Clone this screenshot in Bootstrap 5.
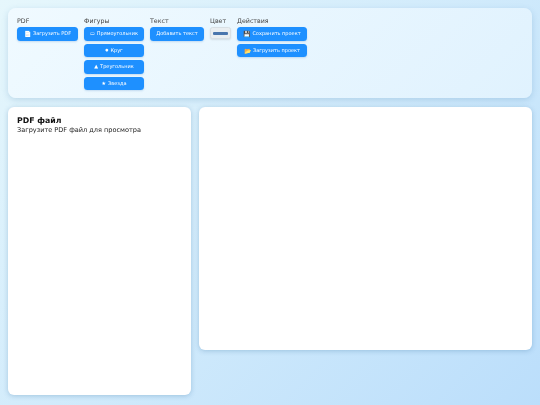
<!DOCTYPE html>
<html lang="ru"><head><meta charset="utf-8"><title>PDF</title>
<link href="https://cdn.jsdelivr.net/npm/bootstrap@5.3.0/dist/css/bootstrap.min.css" rel="stylesheet">
<style>
html,body{height:405px;overflow:hidden}
body{background:linear-gradient(135deg,#e6f7fc 0%,#bbdefb 100%);font-family:"DejaVu Sans",sans-serif;color:#212529;padding:8px}
.tool-panel{height:90px;background:linear-gradient(135deg,#f0faff,#e0f2fe);border-radius:8px;padding:9.4px 9px;box-shadow:0 2px 6px rgba(60,120,170,.22);gap:6px}
.tool-group{display:flex;flex-direction:column}
.tool-label{font-size:6.3px;line-height:8px;margin-bottom:2px;color:#444;height:8px;filter:blur(.2px)}
.tool-stack{display:flex;flex-direction:column;gap:3px}
.tool-btn{background:#1e90ff;color:#fff;border:0;border-radius:3.5px;height:13.5px;font-size:5px;line-height:13.5px;padding:0;text-align:center;white-space:nowrap;box-shadow:0 1px 2px rgba(30,100,180,.2);display:flex;align-items:center;justify-content:center;gap:2px;filter:blur(.2px)}
.tool-emoji{font-size:6px}
.tool-dot{font-size:3.6px}
.w-pdf{width:61px}.w-shape{width:60px}.w-text{width:54px}.w-act{width:70px}
.colour-box{width:21px;height:12px;border-radius:2.5px;background:#e9eef1;border:1px solid #d8dfe4;display:flex;align-items:center;justify-content:center;box-shadow:0 1px 2px rgba(0,0,0,.1);filter:blur(.2px)}
.colour-box span{display:block;width:15px;height:2.5px;background:#4a76ad;border-radius:1px}
.work-row{margin-top:9px;gap:8px;align-items:flex-start}
.sheet{background:#fff;border-radius:6px;box-shadow:0 1px 5px rgba(50,110,160,.3)}
.sheet-left{width:183px;height:288px;padding:9px}
.sheet-right{width:333px;height:243px}
.sheet-title{font-size:7.8px;font-weight:700;line-height:10px;margin:0;color:#111;filter:blur(.15px)}
.sheet-text{font-size:6.55px;line-height:9px;margin:0;color:#222;filter:blur(.15px)}
</style></head><body>
<div class="tool-panel d-flex align-items-start">
 <div class="tool-group"><div class="tool-label">PDF</div><div class="tool-stack"><button class="tool-btn w-pdf"><span class="tool-emoji">📄</span><span>Загрузить PDF</span></button></div></div>
 <div class="tool-group"><div class="tool-label">Фигуры</div><div class="tool-stack">
  <button class="tool-btn w-shape"><span>▭</span><span>Прямоугольник</span></button>
  <button class="tool-btn w-shape"><span class="tool-dot">●</span><span>Круг</span></button>
  <button class="tool-btn w-shape"><span>▲</span><span>Треугольник</span></button>
  <button class="tool-btn w-shape"><span>★</span><span>Звезда</span></button></div></div>
 <div class="tool-group"><div class="tool-label">Текст</div><div class="tool-stack"><button class="tool-btn w-text">Добавить текст</button></div></div>
 <div class="tool-group"><div class="tool-label">Цвет</div><div class="colour-box"><span></span></div></div>
 <div class="tool-group"><div class="tool-label">Действия</div><div class="tool-stack">
  <button class="tool-btn w-act"><span class="tool-emoji">💾</span><span>Сохранить проект</span></button>
  <button class="tool-btn w-act"><span class="tool-emoji">📂</span><span>Загрузить проект</span></button></div></div>
</div>
<div class="work-row d-flex">
 <div class="sheet sheet-left"><h5 class="sheet-title">PDF файл</h5><p class="sheet-text">Загрузите PDF файл для просмотра</p></div>
 <div class="sheet sheet-right"></div>
</div>
<script src="https://cdn.jsdelivr.net/npm/bootstrap@5.3.0/dist/js/bootstrap.bundle.min.js"></script>
</body></html>
